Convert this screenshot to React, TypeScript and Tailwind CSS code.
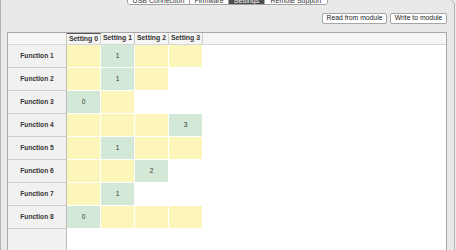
const font = { fontFamily: '"Liberation Sans", Arial, sans-serif' };

type Cell = "y" | "g" | "w";

const rows: { label: string; cells: Cell[]; value: number }[] = [
  { label: "Function 1", cells: ["y", "g", "y", "y"], value: 1 },
  { label: "Function 2", cells: ["y", "g", "y", "w"], value: 1 },
  { label: "Function 3", cells: ["g", "y", "w", "w"], value: 0 },
  { label: "Function 4", cells: ["y", "y", "y", "g"], value: 3 },
  { label: "Function 5", cells: ["y", "g", "y", "y"], value: 1 },
  { label: "Function 6", cells: ["y", "y", "g", "w"], value: 2 },
  { label: "Function 7", cells: ["y", "g", "w", "w"], value: 1 },
  { label: "Function 8", cells: ["g", "y", "y", "y"], value: 0 },
];

const tabs = [
  { name: "USB Connection", w: "w-[61px]" },
  { name: "Firmware", w: "w-[39px]" },
  { name: "Settings", w: "w-[36px]", active: true },
  { name: "Remote Support", w: "w-[63px]" },
];

const App = () => {
  return (
    <div
      className="w-[456px] h-[250px] bg-[#ececec] overflow-hidden text-[#333]"
      style={font}
    >
      <div className="relative w-[455px] h-[260px] -mt-px border border-[#b4b4b4] rounded-tr-[6px] bg-[#e9e9e9] flex flex-col">
        {/* tab strip */}
        <div className="absolute -top-[6px] left-[126px] flex h-[11px] border border-[#a2a2a2] rounded-b-[3px] bg-white overflow-hidden">
          {tabs.map((t, i) => (
            <div
              key={t.name}
              className={`${t.w} flex items-center justify-center text-[7px] leading-none ${
                i > 0 ? "border-l border-[#a2a2a2]" : ""
              } ${t.active ? "bg-[#4d4d4d] text-white" : "bg-white text-[#333]"}`}
            >
              <span className="pt-[2px]">{t.name}</span>
            </div>
          ))}
        </div>

        {/* buttons */}
        <div className="flex justify-end gap-[3px] pt-[13px] mr-[7px]">
          <button className="w-[65px] h-[11px] border border-[#a6a6a6] rounded-[2px] bg-white text-[6.8px] leading-none text-[#222] flex items-center justify-center">
            Read from module
          </button>
          <button className="w-[57px] h-[11px] border border-[#a6a6a6] rounded-[2px] bg-white text-[6.8px] leading-none text-[#222] flex items-center justify-center">
            Write to module
          </button>
        </div>

        {/* table box */}
        <div className="flex-1 mt-[8px] ml-[6px] mr-[7px] border border-[#a9a9a9] bg-white flex flex-col">
          <div className="flex h-[12px] bg-[#f5f5f5] border-b border-[#d6d6d6]">
            <div className="w-[59px] border-r border-[#c4c4c4]" />
            {[0, 1, 2, 3].map((s) => (
              <div
                key={s}
                className={`w-[34px] border-r border-[#cdcdcd] flex items-center justify-center text-[6.9px] font-bold leading-none text-[#333] ${
                  s === 0 ? "border-t border-t-[#555]" : ""
                }`}
              >
                Setting {s}
              </div>
            ))}
          </div>
          <div className="flex flex-1">
            <div className="w-[59px] bg-[#f1f1f1] border-r border-[#bcbcbc] flex flex-col">
              {rows.map((r) => (
                <div
                  key={r.label}
                  className="h-[23px] border-b border-[#cfcfcf] flex items-center justify-center text-[6.6px] font-bold text-[#333]"
                >
                  {r.label}
                </div>
              ))}
            </div>
            <div className="flex flex-col">
              {rows.map((r) => (
                <div key={r.label} className="flex">
                  {r.cells.map((c, i) => (
                    <div
                      key={i}
                      className={`w-[34px] h-[23px] border-r border-b border-white flex items-center justify-center text-[6.6px] text-[#333] ${
                        c === "y"
                          ? "bg-[#fdf6bb]"
                          : c === "g"
                          ? "bg-[#d4e8d8]"
                          : "bg-white"
                      }`}
                    >
                      {c === "g" ? r.value : ""}
                    </div>
                  ))}
                </div>
              ))}
            </div>
          </div>
        </div>
      </div>
    </div>
  );
};

export default App;
